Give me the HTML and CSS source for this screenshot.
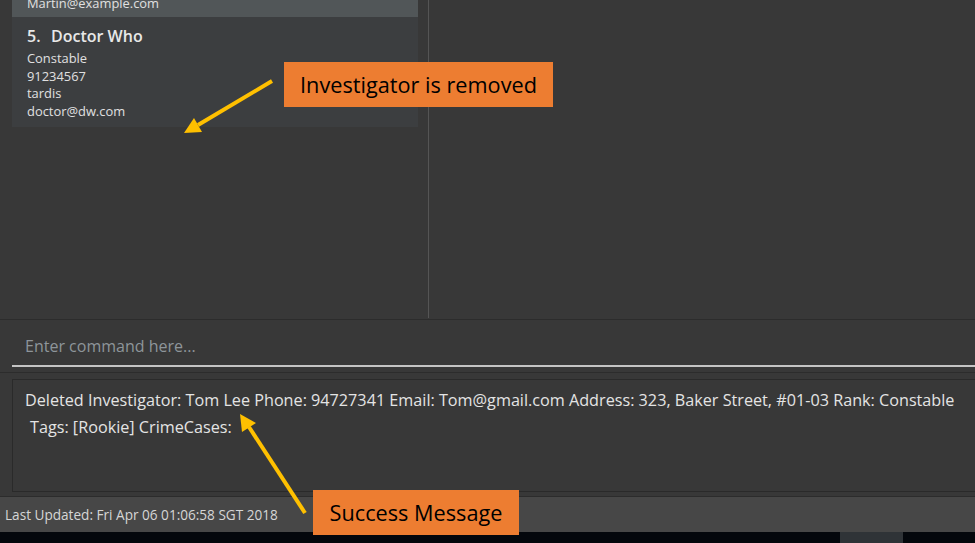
FILE: index.html
```html
<!DOCTYPE html>
<html>
<head>
<meta charset="utf-8">
<link rel="stylesheet" href="styles.css">
</head>
<body>
<div class="app">
  <div class="main">
    <div class="list-panel">
      <div class="card card-selected">
        <div class="line">Martin@example.com</div>
      </div>
      <div class="card">
        <div class="title"><span class="idx">5.</span>Doctor Who</div>
        <div class="line">Constable</div>
        <div class="line">91234567</div>
        <div class="line">tardis</div>
        <div class="line">doctor@dw.com</div>
      </div>
    </div>
    <div class="detail-panel"></div>
  </div>
  <div class="command">
    <div class="command-input">Enter command here...</div>
  </div>
  <div class="result">
    <div class="result-box">
      <div class="result-line">Deleted Investigator: Tom Lee Phone: 94727341 Email: Tom@gmail.com Address: 323, Baker Street, #01-03 Rank: Constable</div>
      <div class="result-line indent">Tags: [Rookie] CrimeCases:</div>
    </div>
  </div>
  <div class="status">Last Updated: Fri Apr 06 01:06:58 SGT 2018</div>
  <div class="taskbar"><div class="task-item"></div></div>

  <div class="note note-removed">Investigator is removed</div>
  <div class="note note-success">Success Message</div>
  <svg class="arrows" width="975" height="543" viewBox="0 0 975 543">
    <line x1="272" y1="81" x2="198" y2="125" stroke="#ffc000" stroke-width="4"/>
    <polygon points="184,133 202,132 194,118" fill="#ffc000"/>
    <line x1="305" y1="513" x2="249" y2="427" stroke="#ffc000" stroke-width="4"/>
    <polygon points="240,414 256,423 242,432" fill="#ffc000"/>
  </svg>
</div>
</body>
</html>
```
FILE: styles.css
```css
html, body {
  margin: 0;
  padding: 0;
  background: #383838;
}
.app {
  position: relative;
  width: 975px;
  height: 543px;
  overflow: hidden;
  display: flex;
  flex-direction: column;
  font-family: "Open Sans", "Noto Sans", sans-serif;
  color: #e2e2e2;
}
.main {
  height: 319px;
  display: flex;
}
.list-panel {
  width: 429px;
  border-right: 1px solid #555555;
  box-sizing: border-box;
  padding: 0 10px 0 12px;
  height: 318px;
}
.detail-panel {
  flex: 1;
}
.card {
  background: #3c3e40;
  padding: 8px 15px 6px 15px;
  font-size: 12.9px;
}
.card-selected {
  background: #515658;
  height: 17px;
  box-sizing: border-box;
  padding: 0 15px;
  display: flex;
  align-items: flex-end;
  overflow: hidden;
}
.card-selected .line {
  line-height: 18px;
  margin-bottom: 5px;
}
.title {
  font-size: 16px;
  font-weight: 600;
  line-height: 22px;
  margin-bottom: 3px;
  color: #e8e8e8;
}
.idx {
  display: inline-block;
  width: 24px;
}
.line {
  line-height: 17.7px;
  color: #e0e0e0;
}
.command {
  height: 52px;
  border-top: 1px solid #2c2c2c;
  border-bottom: 1px solid #2c2c2c;
  padding-left: 12px;
  display: flex;
  align-items: flex-end;
}
.command-input {
  flex: 1;
  height: 40px;
  box-sizing: border-box;
  border-bottom: 2px solid #c4c4c4;
  padding-left: 13px;
  margin-bottom: 5px;
  font-size: 16px;
  line-height: 38px;
  color: #8e959a;
}
.result {
  height: 124px;
  box-sizing: border-box;
  padding: 6px 0 5px 12px;
  border-bottom: 1px solid #2c2c2c;
}
.result-box {
  height: 113px;
  box-sizing: border-box;
  border: 1px solid #2a2a2a;
  border-right: none;
  padding: 7px 0 0 12px;
  font-size: 16.2px;
  line-height: 27px;
  color: #e4e4e4;
  white-space: nowrap;
}
.indent {
  padding-left: 5px;
}
.status {
  height: 35px;
  background: #474747;
  font-size: 13.6px;
  line-height: 35px;
  padding-left: 5px;
  color: #d6d6d6;
}
.taskbar {
  flex: 1;
  background: #04070c;
  position: relative;
}
.task-item {
  position: absolute;
  left: 840px;
  top: 0;
  width: 63px;
  height: 11px;
  background: #2f3337;
}
.note {
  position: absolute;
  background: #ed7d31;
  color: #000000;
  font-family: "Open Sans", "Noto Sans", sans-serif;
  font-size: 21.7px;
  height: 45px;
  line-height: 45px;
  text-align: center;
}
.note-removed {
  left: 284px;
  top: 62px;
  width: 269px;
}
.note-success {
  left: 313px;
  top: 490px;
  width: 206px;
}
.arrows {
  position: absolute;
  left: 0;
  top: 0;
  pointer-events: none;
}
```
